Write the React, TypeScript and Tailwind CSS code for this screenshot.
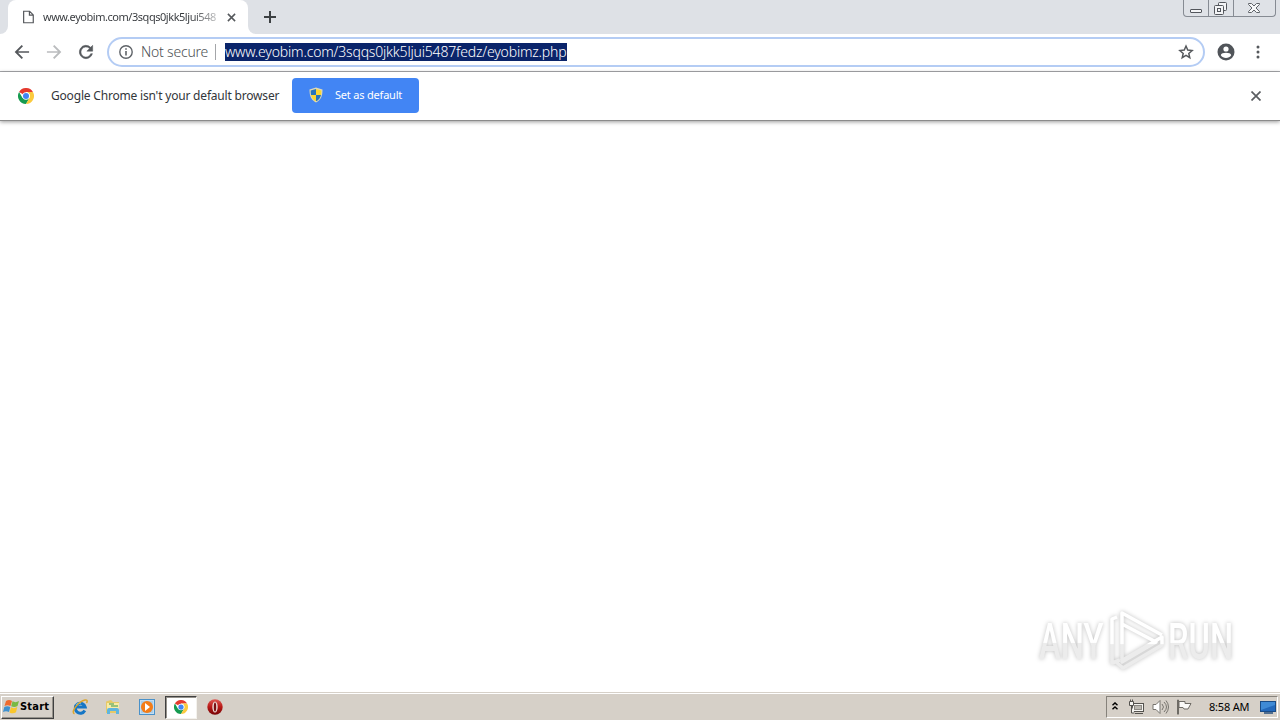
import React from "react";

const uiFont = "font-['Noto_Sans','Open_Sans',sans-serif]";

function ChromeLogo({ className }: { className: string }) {
  return (
    <svg viewBox="0 0 48 48" className={className}>
      <path d="M24 24 3.2 12A24 24 0 0 1 44.8 12L24 12Z" fill="#e53a2e" />
      <path d="M3.2 12A24 24 0 0 0 24 48L34.4 30 24 24 13.6 30Z" fill="#169b50" />
      <path d="M44.8 12A24 24 0 0 1 24 48L34.4 30A12 12 0 0 0 24 12Z" fill="#fbca3e" />
      <circle cx="24" cy="24" r="11" fill="#fff" />
      <circle cx="24" cy="24" r="9" fill="#4285f4" />
    </svg>
  );
}

function TabStrip() {
  return (
    <header className="flex h-[34px] shrink-0 items-start bg-[#dee1e6]">
      <div className="flex h-[34px] w-2 shrink-0 items-end bg-white">
        <div className="h-full w-full rounded-br-lg bg-[#dee1e6]" />
      </div>
      <div className="flex h-[34px] w-[240px] shrink-0 items-center rounded-t-lg bg-white pl-[15px]">
        <svg viewBox="0 0 12 14" className="h-[14px] w-[11px] shrink-0" fill="none" stroke="#55585c" strokeWidth="1.3">
          <path d="M.7.7h6.5l4 4v8.6H.7ZM7 .7V5h4.2" />
        </svg>
        <div className="ml-[9px] w-[174px] whitespace-nowrap bg-linear-to-r from-[#34373b] from-85% to-[#34373b]/30 bg-clip-text text-[11px] tracking-[-0.46px] text-transparent">
          www.eyobim.com/3sqqs0jkk5ljui548
        </div>
        <svg viewBox="0 0 10 10" className="ml-[10px] h-[9px] w-[9px]" stroke="#55585c" strokeWidth="1.7">
          <path d="m1 1 8 8M9 1 1 9" />
        </svg>
      </div>
      <div className="flex h-[34px] w-2 bg-white">
        <div className="h-full w-full rounded-bl-lg bg-[#dee1e6]" />
      </div>
      <svg viewBox="0 0 12 12" className="ml-2 mt-[11px] h-3 w-3" stroke="#3c4043" strokeWidth="2">
        <path d="M6 0v12M0 6h12" />
      </svg>
      <div className="ml-auto mr-1 flex h-[17px] w-[93px] rounded-b-[4px] border border-t-0 border-[#868b93] bg-[#dfe2e7]">
        <div className="flex w-[25px] items-end justify-center border-r border-[#868b93] pb-[3px]">
          <div className="h-[4px] w-3 rounded-[1px] border border-[#53565c] bg-[#f3f4f6]" />
        </div>
        <div className="flex w-[25px] justify-center border-r border-[#868b93] pr-px pt-[2px]">
          <svg viewBox="0 0 13 13" className="h-[13px] w-[13px]" fill="#f3f4f6" stroke="#53565c">
            <rect x="4.5" y=".5" width="8" height="8" rx="1" />
            <rect x=".5" y="3.5" width="9" height="9" rx="1" />
            <rect x="3.5" y="6.5" width="3" height="3" />
          </svg>
        </div>
        <div className="flex flex-1 justify-center pr-px pt-[3px]">
          <svg viewBox="0 0 12 10" className="h-[10px] w-3" fill="#f6f7f8" stroke="#60646a">
            <path d="M.5.5h3L6 3 8.500.500h3v1L8 5l3.500 3.500v1h-3L6 7 3.500 9.500h-3v-1L4 5 .5 1.500Z" />
          </svg>
        </div>
      </div>
    </header>
  );
}

function Toolbar() {
  return (
    <div className="flex h-[38px] shrink-0 items-center border-b border-[#a9aaae] bg-white pb-px">
      <svg viewBox="0 0 24 24" className="ml-3 h-5 w-5 fill-[#55585c]">
        <path d="M20.500 11H7.300l5.900-5.900L11.600 3.600 3.200 12l8.400 8.400 1.600-1.500L7.300 13h13.200z" />
      </svg>
      <svg viewBox="0 0 24 24" className="ml-3 h-5 w-5 fill-[#babcbe]">
        <path d="M3.500 11h13.200l-5.900-5.900 1.600-1.500 8.400 8.400-8.400 8.400-1.600-1.500 5.900-5.900H3.500z" />
      </svg>
      <svg viewBox="0 0 24 24" className="ml-3 h-5 w-5 fill-[#55585c]">
        <path d="M17.650 6.350A8 8 0 1 0 19.730 14h-2.080A6 6 0 1 1 16.220 7.780L13 11h7V4z" stroke="#55585c" strokeWidth=".6" />
      </svg>
      <div className="ml-[11px] flex h-[30px] w-[1098px] items-center rounded-full border-2 border-[#b4ccf4] bg-white pl-[10px]">
        <svg viewBox="0 0 14 14" className="h-[14px] w-[14px]" fill="none" stroke="#5f6368" strokeWidth="1.4">
          <circle cx="7" cy="7" r="6.200" />
          <path d="M7 6v4.500M7 3.300v1.500" strokeWidth="1.600" />
        </svg>
        <span className="ml-[8px] w-[67px] whitespace-nowrap text-[14px] font-light leading-[18px] tracking-[-0.2px] text-[#4c4f53]">Not secure</span>
        <span className="ml-[7px] h-4 w-px bg-[#a4a6a9]" />
        <span className="ml-[9px] h-[18px] w-[342px] whitespace-nowrap bg-[#0a246a] text-[14px] font-light leading-[18px] tracking-[-0.18px] text-white">
          www.eyobim.com/3sqqs0jkk5ljui5487fedz/eyobimz.php
        </span>
        <svg viewBox="0 0 24 24" className="ml-auto mr-[9px] h-4 w-4" fill="none" stroke="#55585c" strokeWidth="2.200">
          <path d="m12 3 2.600 6.100 6.600.6-5 4.400 1.500 6.500L12 17.200l-5.700 3.400 1.500-6.500-5-4.400 6.600-.6Z" />
        </svg>
      </div>
      <svg viewBox="0 0 18 18" className="ml-3 h-[18px] w-[18px]">
        <circle cx="9" cy="9" r="8.500" fill="#505459" />
        <circle cx="9" cy="6" r="2.600" fill="#fff" />
        <path d="M3.800 12.200c.4-3.200 10-3.200 10.400 0a6.200 6.200 0 0 1-10.400 0Z" fill="#fff" />
      </svg>
      <svg viewBox="0 0 4 14" className="ml-[21px] h-[14px] w-1 fill-[#55585c]">
        <circle cx="2" cy="2" r="1.500" />
        <circle cx="2" cy="7" r="1.500" />
        <circle cx="2" cy="12" r="1.500" />
      </svg>
    </div>
  );
}

function Shield() {
  return (
    <svg viewBox="0 0 14 16" className="mb-px h-4 w-[14px]">
      <path d="M7 .5 13.500 2.500C13.500 9 12 13 7 15.500 2 13 .5 9 .5 2.500Z" fill="#ded9b6" />
      <path d="M7 2v6H2C1.700 6.500 1.700 5 1.700 3.500Z" fill="#2674bb" />
      <path d="m7 2 5.300 1.500c0 1.500 0 3-.3 4.500H7Z" fill="#fbd631" />
      <path d="M7 8H2c.7 3 2.200 5 5 6.300Z" fill="#fbd631" />
      <path d="M7 8h5c-.7 3-2.200 5-5 6.300Z" fill="#2674bb" />
    </svg>
  );
}

function InfoBar() {
  return (
    <div className="flex h-[49px] shrink-0 items-center border-b border-[#8b8b8b] bg-white shadow-[0_1px_4px_rgba(0,0,0,0.4)]">
      <ChromeLogo className="ml-[18px] h-4 w-4" />
      <span className="ml-[17px] w-[229px] whitespace-nowrap text-[12px] tracking-[-0.19px] text-[#33363a]">Google Chrome isn't your default browser</span>
      <button className="mb-px ml-3 flex h-[35px] w-[127px] items-center rounded-[4px] bg-[#4285f4] pl-[17px] text-[11px] text-white">
        <Shield />
        <span className="ml-3 whitespace-nowrap tracking-[-0.2px]">Set as default</span>
      </button>
      <svg viewBox="0 0 10 10" className="ml-auto mr-[19px] h-[10px] w-[10px]" stroke="#5b5e62" strokeWidth="1.700">
        <path d="m.5.500 9 9M9.500.500l-9 9" />
      </svg>
    </div>
  );
}

function Watermark() {
  return (
    <svg viewBox="0 0 206 72" className="h-[72px] w-[206px] overflow-visible drop-shadow-[0_0_2px_rgba(0,0,0,0.25)]">
      <defs>
        <linearGradient id="wm-mark" x1="0" y1="0" x2="0" y2="72" gradientUnits="userSpaceOnUse">
          <stop offset=".54" stopColor="#ffffff" />
          <stop offset=".55" stopColor="#ececec" />
        </linearGradient>
        <linearGradient id="wm-text" x1="0" y1="-54" x2="0" y2="18" gradientUnits="userSpaceOnUse">
          <stop offset=".52" stopColor="#ffffff" />
          <stop offset=".53" stopColor="#ececec" />
        </linearGradient>
      </defs>
      <g fill="url(#wm-text)" className="font-['Roboto',sans-serif] text-[50px] font-medium">
        <text transform="translate(6 54) scale(.7 1)" textLength="92" lengthAdjust="spacingAndGlyphs">ANY</text>
        <text transform="translate(135 54) scale(.7 1)" textLength="93" lengthAdjust="spacingAndGlyphs">RUN</text>
      </g>
      <g fill="none" stroke="url(#wm-mark)" strokeWidth="3.500" strokeLinejoin="round">
        <path d="M89 52V8l40 22M89 19l34 18-34 20Z" />
        <path d="M84 12l-5 2v44l8-3M83 57l7 6 39-23v-8L88 56" />
      </g>
    </svg>
  );
}

function QuickLaunch() {
  return (
    <div className="ml-[18px] flex items-center">
      <svg viewBox="0 0 16 16" className="h-4 w-4" fill="none">
        <path d="M12.800 11.500A5 5 0 1 1 13.200 8H4" stroke="#1676c5" strokeWidth="3" />
        <path d="M4.300 6.200A4.500 4.500 0 0 1 9 4" stroke="#67c5f3" strokeWidth="1.500" />
        <path d="M2.500 14.800C-2 13 7 2 13 1c3-.4 2.200 2 1.400 3" stroke="#dca52b" strokeWidth="1.500" />
      </svg>
      <svg viewBox="0 0 16 16" className="ml-[17px] h-4 w-4">
        <path d="M1 2.500 6 1l2 2h6v11H1Z" fill="#e7c967" />
        <path d="M2 4h12v7H2Z" fill="#f9eba5" />
        <path d="M4 5h5M6 7h7" stroke="#78b56b" strokeWidth="1.300" />
        <path d="M2 15v-4q0-2 2-2h8q2 0 2 2v4h-3v-3H5v3Z" fill="#5fb5df" />
      </svg>
      <svg viewBox="0 0 16 16" className="ml-[18px] h-4 w-4">
        <rect x=".5" y=".5" width="15" height="15" fill="#c3def2" stroke="#4a91c9" />
        <rect x="2" y="2" width="12" height="12" fill="#a9cde8" />
        <circle cx="8" cy="8" r="6" fill="#f47c16" />
        <path d="m6 4 5 4-5 4Z" fill="#fff" />
      </svg>
      <div className="ml-[10px] flex h-[23px] w-8 items-center justify-center border border-t-[#404040] border-l-[#404040] border-r-[#f4f2ed] border-b-[#f4f2ed] bg-white shadow-[inset_1px_1px_0_#96928b]">
        <ChromeLogo className="h-[14px] w-[14px]" />
      </div>
      <svg viewBox="0 0 16 16" className="ml-[10px] h-4 w-4">
        <defs>
          <linearGradient id="opera" x1="0" y1="0" x2="0" y2="1">
            <stop stopColor="#df5751" />
            <stop offset=".5" stopColor="#b81917" />
            <stop offset="1" stopColor="#760406" />
          </linearGradient>
        </defs>
        <circle cx="8" cy="8" r="7.700" fill="url(#opera)" />
        <ellipse cx="8" cy="8" rx="2.700" ry="5.500" fill="#ead9d4" />
        <ellipse cx="8" cy="8" rx="1.200" ry="4.500" fill="#791012" />
      </svg>
    </div>
  );
}

function TrayIcons() {
  return (
    <>
      <svg viewBox="0 0 6 8" className="mb-[2px] ml-[5px] h-2 w-[6px]" fill="none" stroke="#000" strokeWidth="1.400">
        <path d="M.5 3.300 3 .9l2.500 2.400M.5 7.300 3 4.900l2.500 2.400" />
      </svg>
      <svg viewBox="0 0 17 16" className="ml-[10px] h-4 w-[17px]" fill="#f6f5f2" stroke="#54524e">
        <rect x="4.500" y="4.500" width="11" height="8" />
        <rect x="6.500" y="6.500" width="7" height="4" fill="#bbb8b1" stroke="#8d8a84" />
        <path d="M1.500 2.500h4v4h-4ZM2.500.5v2M4.500.5v2M3.500 7v7h3M7 14.500h8" />
      </svg>
      <svg viewBox="0 0 17 16" className="ml-[7px] h-4 w-[17px]" fill="#fff" stroke="#77746e">
        <path d="M1 5.500h3l4-4v13l-4-4H1Z" />
        <path d="M10 5q3 3 0 6M12 3q5 5 0 10M14 1.500q5 6.500 0 13" fill="none" />
      </svg>
      <svg viewBox="0 0 16 16" className="ml-[7px] h-4 w-4" fill="#faf9f7" stroke="#6e6b65">
        <path d="M2.500 15.500V1h-1v14.500M3 2.500h6v2h6l-3 5.500H8l-1-1.500H3Z" />
      </svg>
    </>
  );
}

function Taskbar() {
  return (
    <footer className="flex h-[27px] shrink-0 items-center border-t border-white bg-[#d6d0c8]">
      <button className="ml-px flex h-[23px] w-[53px] items-center border border-t-white border-l-white border-r-[#404040] border-b-[#404040] bg-[#d6d0c8] pl-px shadow-[inset_-1px_-1px_0_#96928b]">
        <svg viewBox="0 0 17 16" className="h-4 w-[17px] shrink-0">
          <path d="M3 2q3-2 6 0L7.500 7q-3-1.500-6 0Z" fill="#ef6b2e" />
          <path d="M9.500 2.300q3 1.800 6.500-.3L14.500 7q-3 2-6.300.3Z" fill="#79b943" />
          <path d="M1.300 8q3-1.600 6 0L6 13q-3-1.600-6 0Z" fill="#3f91cf" />
          <path d="M8 8.300q3 1.800 6.300-.3L13 13.200q-3 2-6.500.2Z" fill="#f9c62c" />
        </svg>
        <span className="font-['DejaVu_Sans_Condensed','DejaVu_Sans',sans-serif] text-[11px] font-bold tracking-[0.2px] text-black">Start</span>
      </button>
      <QuickLaunch />
      <div className="ml-auto mr-[2px] flex h-[22px] w-[172px] items-center border border-t-[#86827b] border-l-[#86827b] border-r-white border-b-white">
        <TrayIcons />
        <span className="ml-[17px] w-[41px] whitespace-nowrap text-[11px] tracking-[-0.2px] text-black">8:58 AM</span>
        <svg viewBox="0 0 16 14" className="ml-[10px] h-[14px] w-4 shrink-0">
          <rect x=".5" y="1.500" width="15" height="10" fill="#2368ba" stroke="#194b86" />
          <path d="M1 2h14v3L1 10Z" fill="#3f8ad5" />
          <path d="M4 13h9" stroke="#254e7c" strokeWidth="1.500" />
        </svg>
      </div>
    </footer>
  );
}

export default function App() {
  return (
    <div className={`flex h-[720px] w-[1280px] flex-col overflow-hidden bg-white ${uiFont}`}>
      <TabStrip />
      <Toolbar />
      <InfoBar />
      <main className="flex flex-1 items-end justify-end pb-[15px] pr-[41px]">
        <Watermark />
      </main>
      <div className="h-px shrink-0 bg-[#d6d0c8]" />
      <Taskbar />
    </div>
  );
}
